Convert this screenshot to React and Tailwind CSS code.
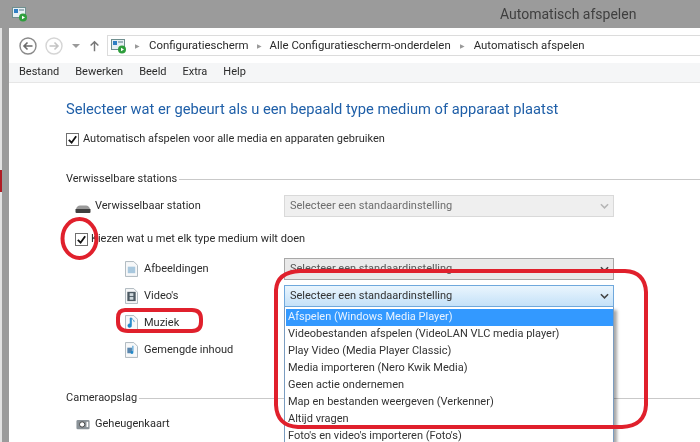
const font = { fontFamily: 'Roboto, "Noto Sans", sans-serif' };

const options = [
  'Afspelen (Windows Media Player)',
  'Videobestanden afspelen (VideoLAN VLC media player)',
  'Play Video (Media Player Classic)',
  'Media importeren (Nero Kwik Media)',
  'Geen actie ondernemen',
  'Map en bestanden weergeven (Verkenner)',
  'Altijd vragen',
  "Foto's en video's importeren (Foto's)",
];

function AutoplayIcon({ className }) {
  return (
    <svg viewBox="0 0 16 16" className={className}>
      <rect x="0.5" y="1.5" width="13" height="10" fill="#e8f0f4" stroke="#6f8f8f" />
      <rect x="2" y="3" width="4" height="4" fill="#2f7fc4" />
      <rect x="7" y="3" width="5" height="2" fill="#9fb4bd" />
      <circle cx="11" cy="11.5" r="4" fill="#2e9e3c" />
      <path d="M10 9.7 L13 11.5 L10 13.3 Z" fill="#fff" />
    </svg>
  );
}

function Check() {
  return (
    <span className="flex h-[13px] w-[13px] shrink-0 items-center justify-center border border-[#707070] bg-white">
      <svg viewBox="0 0 12 12" className="h-[11px] w-[11px]">
        <path d="M2 6.5 L5 9.5 L10 2.5" fill="none" stroke="#111" strokeWidth="2" />
      </svg>
    </span>
  );
}

function Chevron({ color }) {
  return (
    <svg viewBox="0 0 10 6" className="h-[6px] w-[9px]">
      <path d="M1 1 L5 5 L9 1" fill="none" stroke={color} strokeWidth="1.7" />
    </svg>
  );
}

function Select({ variant }) {
  const styles = {
    disabled: 'border-[#d9d9d9] bg-[#efefef] text-[#6d6d6d]',
    normal: 'border-[#a8a8a8] bg-[#e9e9e9] text-[#555]',
    open: 'border-[#6fa8dc] bg-gradient-to-b from-[#eaf5fd] to-[#c4e1f8] text-[#333]',
  };
  return (
    <div className={`flex h-[22px] w-[330px] items-center justify-between border pl-[5px] pr-[4px] ${styles[variant]}`}>
      <span className="pt-px">Selecteer een standaardinstelling</span>
      <Chevron color={variant === 'disabled' ? '#b5b5b5' : '#444'} />
    </div>
  );
}

function DocIcon({ kind }) {
  return (
    <svg viewBox="0 0 14 17" className="h-[16px] w-[13px] shrink-0">
      <path d="M0.5 0.5 H9.5 L13.5 4.5 V16.5 H0.5 Z" fill="#f7f8f9" stroke="#a9b3ba" />
      {kind === 'image' && <rect x="3" y="6" width="8" height="7" fill="#a9c8de" />}
      {kind === 'video' && (
        <>
          <rect x="2.5" y="4" width="9" height="10" fill="#4d5a63" />
          <rect x="5" y="5.5" width="4" height="3" fill="#cfd8dd" />
          <rect x="5" y="9.5" width="4" height="3" fill="#cfd8dd" />
        </>
      )}
      {kind === 'music' && (
        <path d="M7 3 V11 A2 2 0 1 1 5.5 9.4 V3 Z M7 3 C8 5 10 5 10 7.5" fill="#1f88c9" stroke="#1f88c9" strokeWidth="0.6" />
      )}
      {kind === 'mixed' && (
        <>
          <rect x="2.5" y="6" width="5" height="6" fill="#5a86ad" />
          <path d="M9 4 V11 A1.5 1.5 0 1 1 8 9.8 V4 Z" fill="#1f88c9" />
        </>
      )}
    </svg>
  );
}

function SubRow({ kind, label, select }) {
  return (
    <div className="flex h-[27px] items-center">
      <div className="flex w-[161px] items-center gap-[6px] pl-[2px]">
        <DocIcon kind={kind} />
        <span className="pt-px">{label}</span>
      </div>
      {select}
    </div>
  );
}

function Section({ label }) {
  return (
    <div className="flex h-[20px] items-center gap-[2px]">
      <span>{label}</span>
      <div className="h-px flex-1 bg-[#c9c9c9]" />
    </div>
  );
}

export default function App() {
  return (
    <div style={font} className="relative h-[442px] w-[700px] overflow-hidden bg-white text-[11px] text-[#2b2b2b] blur-[0.35px]">
      {/* title bar */}
      <div className="relative flex h-[28px] items-center bg-[#9b9b9b] pl-[12px]">
        <AutoplayIcon className="h-[16px] w-[16px]" />
        <span className="ml-[472px] text-[14px] text-[#3f3f3f]">Automatisch afspelen</span>
      </div>

      <div className="flex h-[414px]">
        {/* window frame, with a sliver of the desktop behind it */}
        <div className="flex w-[9px] shrink-0 bg-[#9b9b9b]">
          <div className="flex w-[2px] flex-col bg-[#e2e2e2]">
            <div className="mt-[142px] h-[22px] bg-[#b01c24]" />
          </div>
        </div>

        <div className="flex min-w-0 flex-1 flex-col">
          {/* nav bar */}
          <div className="flex h-[35px] items-center pl-[10px]">
            <svg viewBox="0 0 18 18" className="h-[18px] w-[18px]">
              <circle cx="9" cy="9" r="8" fill="#fff" stroke="#8a8a8a" strokeWidth="1.4" />
              <path d="M13.5 9 H5.5 M8.5 5.5 L5 9 L8.5 12.5" fill="none" stroke="#6a6a6a" strokeWidth="1.6" />
            </svg>
            <svg viewBox="0 0 18 18" className="ml-[8px] h-[18px] w-[18px]">
              <circle cx="9" cy="9" r="8" fill="#fff" stroke="#d5d5d5" strokeWidth="1.4" />
              <path d="M4.5 9 H12.5 M9.5 5.5 L13 9 L9.5 12.5" fill="none" stroke="#c4c4c4" strokeWidth="1.6" />
            </svg>
            <svg viewBox="0 0 8 4" className="ml-[9px] h-[4px] w-[8px]">
              <path d="M0 0 H8 L4 4 Z" fill="#9a9a9a" />
            </svg>
            <svg viewBox="0 0 12 14" className="ml-[9px] h-[12px] w-[11px]">
              <path d="M6 13 V2 M1.5 6.5 L6 2 L10.5 6.5" fill="none" stroke="#777" strokeWidth="1.7" />
            </svg>
            <div className="ml-[7px] flex h-[21px] flex-1 items-center border-y border-l border-[#dcdcdc] pl-[3px] text-[11.4px]">
              <AutoplayIcon className="h-[16px] w-[16px]" />
              <span className="ml-[8px] mr-[9px] text-[6px] text-[#9a9a9a]">▶</span>
              <span className="pt-px">Configuratiescherm</span>
              <span className="mx-[8px] text-[6px] text-[#9a9a9a]">▶</span>
              <span className="pt-px">Alle Configuratiescherm-onderdelen</span>
              <span className="mx-[9px] text-[6px] text-[#9a9a9a]">▶</span>
              <span className="pt-px">Automatisch afspelen</span>
            </div>
          </div>

          {/* menu bar */}
          <div className="flex h-[20px] items-center gap-[16px] border-b border-[#e6e6e6] bg-[#f5f6f7] pl-[10px]">
            <span>Bestand</span>
            <span>Bewerken</span>
            <span>Beeld</span>
            <span>Extra</span>
            <span>Help</span>
          </div>

          {/* content */}
          <div className="flex flex-col pl-[57px]">
            <h1 className="mt-[15px] h-[22px] text-[14.7px] font-normal leading-[22px] text-[#1f5fa8]">
              Selecteer wat er gebeurt als u een bepaald type medium of apparaat plaatst
            </h1>
            <div className="mt-[9px] flex h-[20px] items-center gap-[4px]">
              <Check />
              <span>Automatisch afspelen voor alle media en apparaten gebruiken</span>
            </div>

            <div className="mt-[20px]">
              <Section label="Verwisselbare stations" />
            </div>
            <div className="mt-[5px] flex h-[24px] items-center">
              <div className="flex w-[218px] items-start gap-[4px] pl-[9px]">
                <svg viewBox="0 0 16 8" className="mt-[7px] h-[8px] w-[16px] shrink-0">
                  <path d="M1 4 Q2 0.5 5 0.5 H11 Q14 0.5 15 4 Z" fill="#9a9a9a" />
                  <path d="M0.5 4 H15.5 V7 Q15.5 8 14.5 8 H1.5 Q0.5 8 0.5 7 Z" fill="#3f3f3f" />
                </svg>
                <span>Verwisselbaar station</span>
              </div>
              <Select variant="disabled" />
            </div>
            <div className="mt-[11px] flex h-[20px] items-center gap-[3px] pl-[9px]">
              <Check />
              <span>Kiezen wat u met elk type medium wilt doen</span>
            </div>
            <div className="mt-[6px] flex flex-col pl-[57px]">
              <SubRow kind="image" label="Afbeeldingen" select={<Select variant="normal" />} />
              <SubRow
                kind="video"
                label="Video's"
                select={
                  <div className="relative">
                    <Select variant="open" />
                    {/* open dropdown list */}
                    <ul className="absolute left-0 top-[22px] w-[330px] border-x border-[#7a9cc0] bg-white pl-[1px] pt-[2px] text-[#333] shadow-[3px_3px_3px_rgba(0,0,0,0.35)]">
                      {options.map((opt, i) => (
                        <li
                          key={opt}
                          className={`flex h-[17px] items-center pl-[2px] ${i === 0 ? 'bg-[#3399ff] text-[#e8f3ff]' : ''}`}
                        >
                          {opt}
                        </li>
                      ))}
                    </ul>
                  </div>
                }
              />
              <SubRow kind="music" label="Muziek" />
              <SubRow kind="mixed" label="Gemengde inhoud" />
            </div>

            <div className="mt-[25px]">
              <Section label="Cameraopslag" />
            </div>
            <div className="mt-[4px] flex h-[24px] items-center gap-[5px] pl-[10px]">
              <svg viewBox="0 0 16 13" className="h-[12px] w-[14px] shrink-0">
                <rect x="0.5" y="2" width="15" height="10.5" rx="1.5" fill="#8a9298" />
                <circle cx="7" cy="7" r="3" fill="#fff" stroke="#333" />
                <rect x="12" y="4" width="2" height="6" fill="#fff" />
              </svg>
              <span>Geheugenkaart</span>
            </div>
          </div>
        </div>
      </div>

      {/* red marker annotations */}
      <svg viewBox="0 0 700 442" className="pointer-events-none absolute inset-0 h-[442px] w-[700px]" fill="none" stroke="#e0202c" strokeWidth="4">
        <ellipse cx="79.5" cy="238.5" rx="17" ry="19.5" />
        <path d="M125 310 H192 Q201 310 201 319 V322 Q201 331 192 331 H128 Q118 331 118 322 V318 Q118 310 125 310 Z" />
        <path d="M300 271 H625 Q645 272 646 292 V405 Q645 426 622 427 H298 Q277 426 276 405 V290 Q277 272 300 271 Z" />
      </svg>
    </div>
  );
}
